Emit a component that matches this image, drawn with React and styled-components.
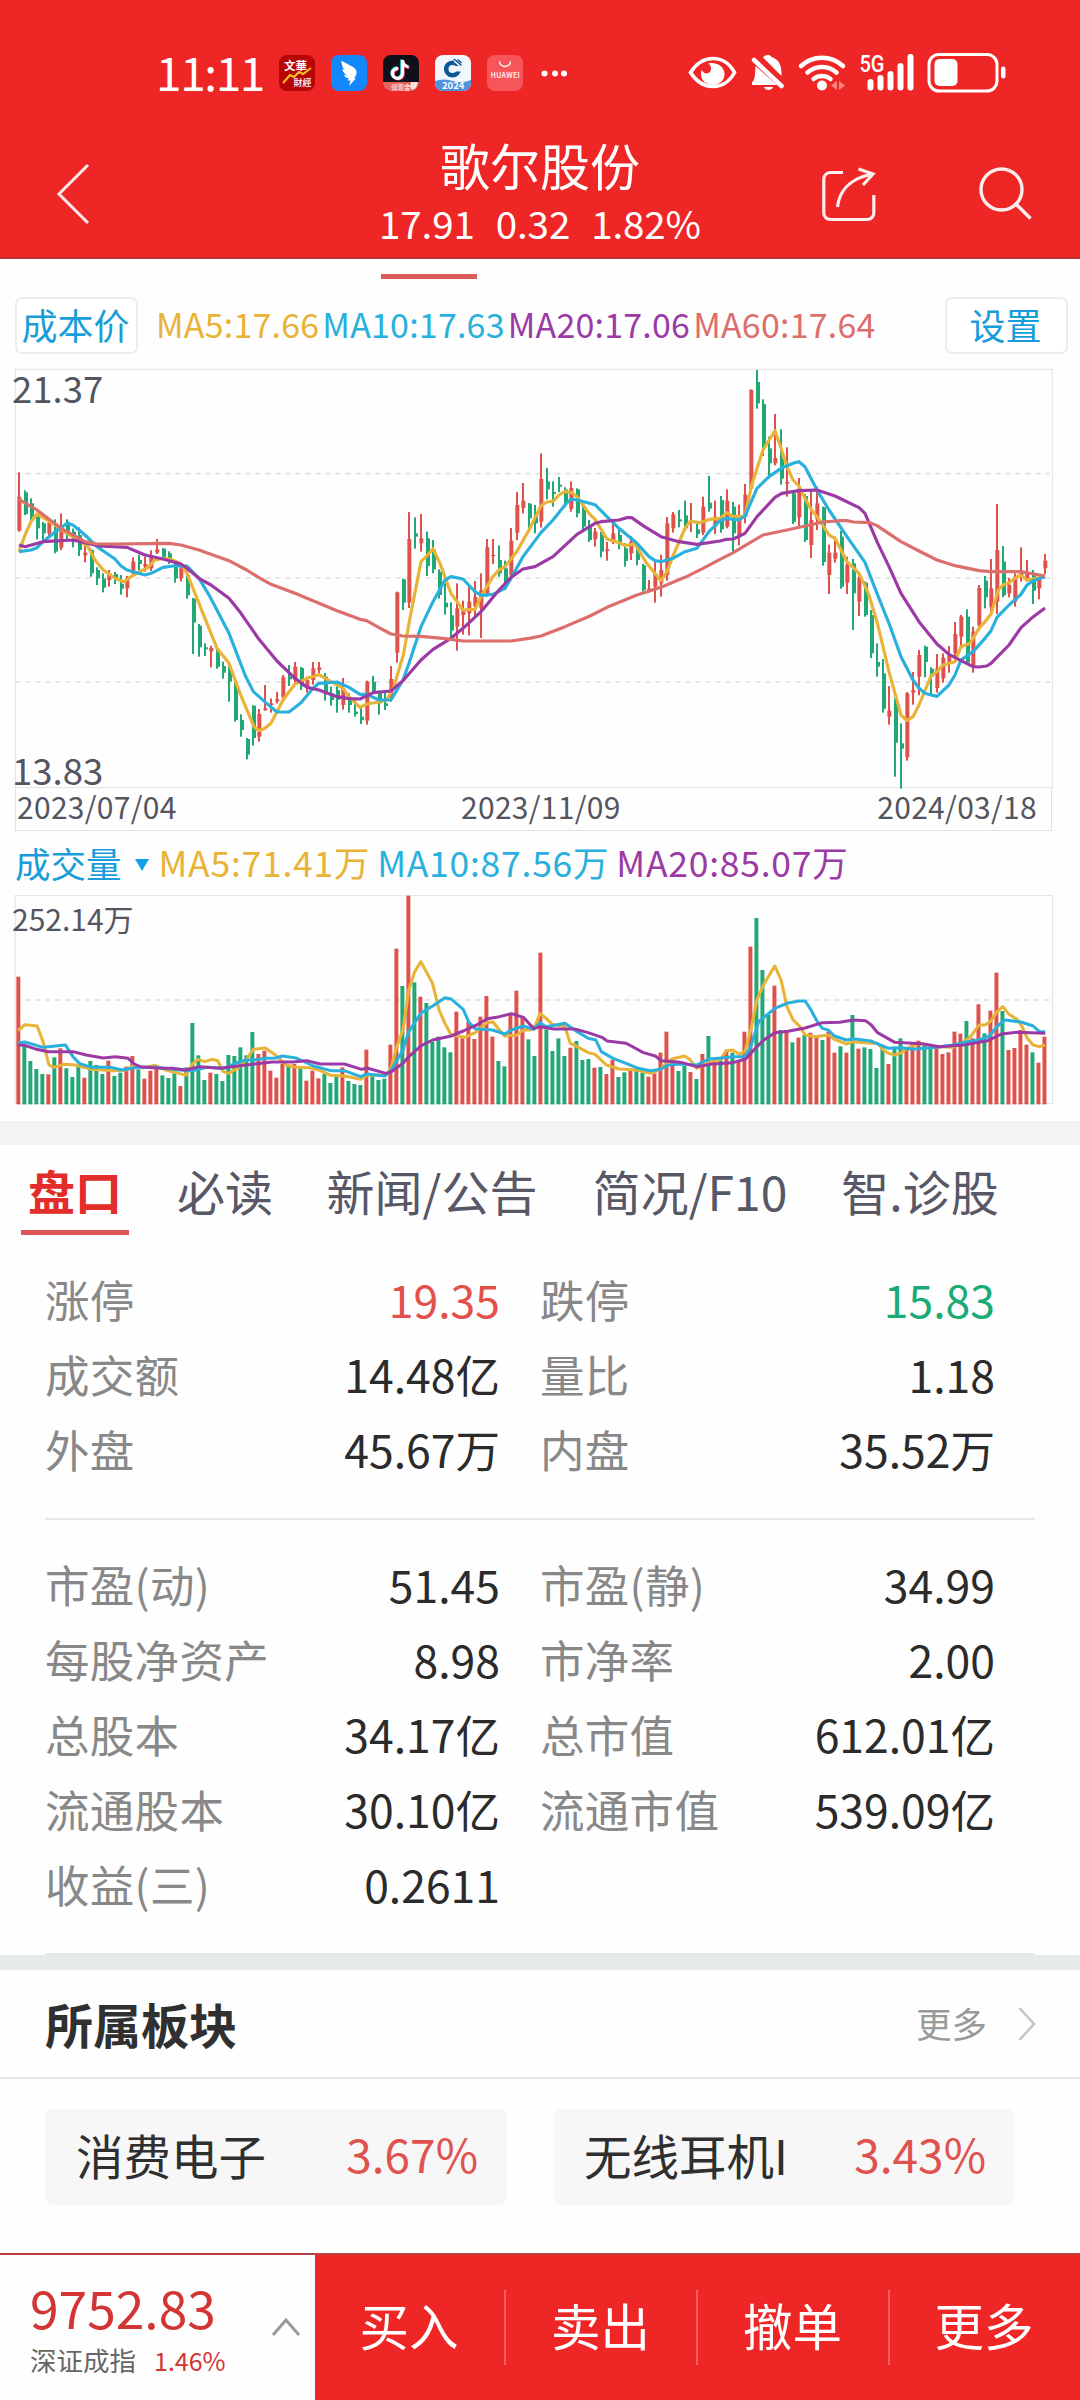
import * as React from "react";
import styled, { createGlobalStyle } from "styled-components";

const RED = "#df524c";
const GREEN = "#22a877";
const MA_COLORS = ["#e8b336", "#29b0dc", "#9c3aa5", "#dc6e6b"];

const GlobalStyle = createGlobalStyle`
  body {
    margin: 0;
    background: #fefefe;
    font-family: "Noto Sans CJK SC", "Noto Sans", sans-serif;
  }

  * {
    box-sizing: border-box;
  }
`;

const Page = styled.main`
  width: 1080px;
  height: 2400px;
  display: flex;
  flex-direction: column;
  overflow: hidden;
  background: #fefefe;
  white-space: nowrap;

  svg {
    display: block;
    flex: none;
  }
`;

/* ---------- header ---------- */

const Header = styled.header`
  height: 259px;
  background: #ee2726;
  border-bottom: 2px solid #b5332f;
  color: #fff;
`;

const StatusBar = styled.div`
  height: 130px;
  padding: 16px 74px 0 156px;
  display: flex;
  align-items: center;
`;

const Clock = styled.span`
  width: 123px;
  font-size: 46px;
  line-height: 60px;
  letter-spacing: -1.4px;
  margin-top: -4px;
`;

const AppIcons = styled.div`
  display: flex;
  align-items: center;
  gap: 16px;
`;

const SystemIcons = styled.div`
  display: flex;
  align-items: center;
  margin-left: auto;
`;

const NavBar = styled.div`
  height: 127px;
  display: grid;
  grid-template-columns: 300px 480px 300px;
`;

const NavSide = styled.div`
  display: flex;
  padding: ${(p) => p.$pad};
  gap: 103px;
`;

const Title = styled.div`
  text-align: center;
  padding-top: 4px;

  h1 {
    margin: 0;
    font-size: 50px;
    line-height: 60px;
    font-weight: 400;
  }
`;

const Quote = styled.div`
  display: flex;
  justify-content: center;
  gap: 21px;
  margin-top: -2px;
  font-size: 38.5px;
  line-height: 60px;
  letter-spacing: -0.1px;
`;

/* ---------- charts ---------- */

const TabMark = styled.div`
  width: 96px;
  height: 5px;
  margin: 15px 0 18px 381px;
  background: #dc5a5a;
  flex: none;
`;

const Toolbar = styled.div`
  height: 57px;
  margin: 0 12px 14px 15px;
  display: flex;
  align-items: center;
  flex: none;
`;

const ToolButton = styled.button`
  width: 123px;
  height: 57px;
  padding: 0 2px 3px 0;
  border: 2px solid #ededf0;
  border-radius: 7px;
  background: #fff;
  color: #199dd9;
  font: inherit;
  font-size: 36px;
  line-height: 50px;
`;

const Legend = styled.div`
  display: flex;
  flex: 1;
  gap: ${(p) => p.$gap};
  margin-left: ${(p) => p.$left};
  margin-bottom: ${(p) => p.$lift || 0};
  font-size: ${(p) => p.$size};
  letter-spacing: ${(p) => p.$spacing};
  line-height: 50px;
`;

const LegendItem = styled.span`
  color: ${(p) => p.$color};
`;

const ChartBox = styled.div`
  position: relative;
  flex: none;
`;

const ScaleLabel = styled.span`
  position: absolute;
  left: 12px;
  top: ${(p) => p.$top};
  font-size: ${(p) => p.$size};
  line-height: 38px;
  color: #54555f;
`;

const DateRow = styled.div`
  height: 42px;
  width: 1037px;
  margin-left: 15px;
  padding: 0 14px 7px 1px;
  display: grid;
  grid-template-columns: 444px 1fr auto;
  align-items: center;
  flex: none;
  border: solid #e2e2e2;
  border-width: 0 1px 1px;
  font-size: 30px;
  line-height: 34px;
  letter-spacing: 0.3px;
  color: #54555f;
`;

const VolumeHead = styled.div`
  height: 64px;
  padding: 0 0 0 15px;
  display: flex;
  align-items: center;
  flex: none;
`;

const VolumeName = styled.span`
  font-size: 35.5px;
  line-height: 50px;
  color: #199dd9;
`;

const Caret = styled.i`
  margin: 4px 0 0 13px;
  border: 7px solid transparent;
  border-top: 12px solid #13a0ea;
  border-bottom: 0;
`;

const Band = styled.div`
  height: ${(p) => p.$height};
  margin-top: ${(p) => p.$top || 0};
  background: ${(p) => p.$color};
  flex: none;
`;

/* ---------- details ---------- */

const Tabs = styled.nav`
  height: 90px;
  padding-left: 21px;
  display: flex;
  flex: none;
`;

const Tab = styled.a`
  width: ${(p) => p.$width};
  margin-right: ${(p) => p.$gap || 0};
  padding-top: 12px;
  text-align: center;
  font-size: ${(p) => (p.$active ? "47px" : "48px")};
  line-height: 66px;
  font-weight: ${(p) => (p.$active ? 700 : 400)};
  color: ${(p) => (p.$active ? "#e22d2b" : "#575766")};
  border-bottom: ${(p) => (p.$active ? "5px solid #dc5656" : "0")};
`;

const Stats = styled.section`
  margin: 0 45px;
  padding: ${(p) => p.$pad};
  display: grid;
  grid-template-columns: 455px 455px;
  column-gap: 40px;
  grid-auto-rows: 75px;
  border-bottom: 2px solid #e6e8e8;
  flex: none;
`;

const Stat = styled.div`
  display: flex;
  justify-content: space-between;
  align-items: center;
  font-size: 44.5px;
  line-height: 75px;
  letter-spacing: 0.3px;
  color: #888;
`;

const StatValue = styled.span`
  letter-spacing: 0;
  color: ${(p) => p.$color || "#2b2b2b"};
`;

const SectionHead = styled.div`
  height: 109px;
  padding: 0 44px 0 45px;
  display: flex;
  align-items: center;
  border-bottom: 2px solid #e4e5e6;
  flex: none;

  h2 {
    margin: 0 auto 1px 0;
    font-size: 48px;
    line-height: 60px;
    font-weight: 700;
    color: #303030;
  }

  span {
    margin: 0 31px 2px 0;
    font-size: 35.5px;
    line-height: 50px;
    color: #999;
  }
`;

const Boards = styled.div`
  padding: 30px 65px 0 45px;
  display: grid;
  grid-template-columns: 462px 462px;
  gap: 46px;
  flex: 1;
`;

const Board = styled.div`
  height: 96px;
  padding: 0 29px 6px 31px;
  display: flex;
  align-items: center;
  justify-content: space-between;
  border-radius: 8px;
  background: #f7f7f7;
  font-size: 47.5px;
  color: #2f2f2f;

  b {
    margin-bottom: 3px;
    font-weight: 400;
    font-size: 46px;
    color: #e0524d;
  }
`;

/* ---------- bottom bar ---------- */

const BottomBar = styled.footer`
  height: 147px;
  display: flex;
  flex: none;
  border-top: 2px solid #b5403f;
  background: #ee2726;
`;

const IndexBox = styled.div`
  width: 315px;
  padding: 22px 14px 0 30px;
  display: flex;
  justify-content: space-between;
  background: #fefefe;
  color: #d23534;

  svg {
    margin-top: 40px;
  }
`;

const IndexPrice = styled.div`
  font-size: 51.5px;
  line-height: 60px;
`;

const IndexName = styled.div`
  display: flex;
  gap: 18px;
  margin-top: 2px;
  font-size: 25px;
  line-height: 42px;

  span {
    font-size: 26.5px;
    color: #666;
  }
`;

const Actions = styled.div`
  flex: 1;
  display: grid;
  grid-template-columns: 189px 192px 192px 191px;
  align-items: center;
`;

const Action = styled.button`
  height: 75px;
  margin-top: -1px;
  padding: 0 1px 6px 0;
  border: 0;
  border-left: ${(p) => (p.$first ? "0" : "2px solid #f4605d")};
  background: none;
  color: #fff;
  font: inherit;
  font-size: 49.5px;
  line-height: 70px;
`;

/* ---------- data ---------- */

// up/down, high, body top, body bottom, low, volume top
const CANDLES = `
R 337 410 512 515 440|G 391 397 462 465 645|G 415 430 470 486 693|G 462 470 505 538 717|G 486 490 520 543 732
R 474 488 520 535 733|G 478 505 575 580 682|R 460 500 563 570 655|G 478 485 528 540 715|G 506 515 540 562 741
G 502 525 570 588 711|R 550 578 586 607 743|G 566 570 640 650 693|G 622 630 655 675 705|G 640 655 683 697 732
R 630 640 660 680 692|G 636 642 660 672 738|G 645 672 686 704 728|R 648 655 685 712 710|R 592 605 640 650 678
G 584 600 612 632 718|R 590 612 620 635 746|R 571 590 625 633 722|R 537 568 578 582 710|G 564 566 592 595 736
G 574 580 598 612 744|G 600 612 655 668 730|R 612 625 655 664 768|G 630 645 706 716 712|G 714 716 788 882 579
G 792 797 862 890 676|G 850 862 868 888 750|R 857 864 874 922 728|G 865 870 920 926 732|G 905 918 938 956 753
G 915 925 965 1025 675|G 960 972 1080 1085 678|G 1063 1080 1110 1130 652|G 1134 1137 1184 1198 676|G 1036 1037 1134 1157 606
R 1047 1062 1130 1145 672|R 975 1045 1050 1052 662|R 1015 1030 1035 1058 722|R 996 1018 1024 1030 743|R 945 952 1010 1018 702
G 915 950 958 978 710|R 906 920 960 970 702|G 921 924 980 990 712|R 950 960 985 998 752|R 906 925 960 974 722
R 906 922 930 940 745|G 939 950 1000 1022 732|G 980 1000 1020 1037 759|G 975 990 1020 1058 740|R 954 985 1035 1049 712
G 1000 1020 1035 1058 753|G 1020 1055 1062 1070 762|G 1040 1070 1080 1092 765|R 962 965 1082 1094 659|G 948 965 995 1000 738
G 992 1000 1030 1064 750|G 995 1030 1038 1050 746|R 918 957 1015 1025 644|R 695 697 878 908 356|G 656 658 728 750 468
R 456 537 728 744 197|G 472 520 530 566 457|R 462 535 550 575 500|G 515 535 618 648 519|G 540 570 628 640 635
G 628 635 705 716 620|G 670 728 742 764 652|G 727 766 812 834 667|R 670 745 800 872 545|R 722 750 765 824 625
R 672 725 760 826 575|R 663 710 740 768 627|R 640 690 745 834 560|R 537 562 700 710 498|R 537 585 588 612 620
G 556 600 640 650 693|G 602 625 665 690 709|R 504 542 645 660 555|R 396 435 518 540 482|R 369 422 444 460 562
G 429 431 475 505 628|G 435 465 490 520 678|R 280 357 485 503 368|G 324 364 388 418 598|G 364 396 402 440 663
G 351 374 380 396 625|G 382 388 430 442 678|R 364 384 446 455 653|G 385 388 460 472 633|G 435 450 500 508 690
G 480 495 540 546 687|R 504 515 538 560 713|G 516 525 575 592 711|R 546 568 573 602 732|R 490 520 540 552 690
G 510 525 550 568 741|G 550 565 603 620 727|R 528 545 580 600 722|G 556 560 600 616 722|G 612 616 690 695 728
R 660 685 692 698 740|R 600 640 680 728 730|R 584 630 670 710 668|R 471 490 645 662 605|R 456 463 505 518 690
G 450 478 484 502 723|G 422 466 505 512 708|R 429 480 488 516 726|G 490 508 522 534 747|R 410 440 518 525 672
G 348 428 446 455 618|R 422 470 500 522 690|G 408 420 508 518 682|R 388 422 500 505 665|G 426 440 520 574 668
R 434 465 525 556 690|R 372 404 470 490 605|R 88 90 385 390 350|G 30 66 130 146 264|G 118 132 260 288 420
G 230 265 310 356 555|R 162 294 310 316 467|G 208 295 356 374 600|R 262 366 371 410 600|G 392 400 486 492 637
R 354 385 472 502 623|G 402 408 540 546 615|R 390 480 555 594 608|R 380 430 478 510 615|G 440 442 606 617 630
R 554 578 645 702 605|R 530 578 596 608 668|G 512 530 680 686 649|R 590 615 668 702 668|G 597 610 700 810 555
R 640 655 725 768 656|G 664 668 765 770 652|G 750 765 880 894 657|G 850 906 920 950 714|G 897 940 1046 1058 645
R 978 1052 1070 1094 702|G 1015 1020 1148 1250 650|G 1090 1150 1166 1286 625|R 996 1000 1192 1202 660|R 936 990 998 1034 640
R 870 885 950 1006 632|G 857 860 906 952 645|G 922 926 950 1008 652|R 882 925 984 998 645|R 880 893 955 968 672
R 858 885 905 938 667|R 786 822 880 890 605|R 765 770 830 860 611|G 748 770 908 912 573|R 800 815 920 938 625
R 675 684 795 812 523|G 648 662 712 745 610|R 597 685 740 760 542|R 432 570 725 762 428|G 558 605 706 712 543
R 654 675 700 712 660|R 640 650 725 740 654|R 562 635 652 665 600|R 600 640 655 665 644|G 630 645 692 732 667
R 650 655 685 718 698|R 582 602 625 642 620`
  .trim()
  .split(/[|\n]/)
  .map((row) => {
    const [dir, ...nums] = row.split(" ");
    const [high, top, bottom, low, volume] = nums.map(Number);
    return { up: dir === "R", high, top, bottom, low, volume };
  });

const PRICE_LINES = [
  "57,575 75,525 93,485 111,462 129,472 165,495 201,520 237,540 264,560 285,600 310,630 345,655 372,666 390,652 417,636 440,625 465,600 489,595 515,598 543,612 561,640 597,730 651,865 687,910 720,1000 762,1100 777,1112 795,1105 813,1090 849,1020 885,972 921,955 957,944 993,965 1029,985 1047,1010 1080,1042 1100,1032 1137,1026 1160,1020 1180,985 1210,885 1227,790 1263,605 1280,588 1299,566 1320,610 1353,700 1389,750 1425,748 1445,705 1479,650 1497,630 1515,620 1550,575 1587,510 1623,437 1641,426 1659,424 1677,405 1695,394 1713,397 1731,410 1767,460 1785,478 1821,537 1857,548 1875,557 1905,552 1940,610 1983,662 2001,635 2020,585 2055,505 2070,484 2100,488 2130,478 2160,475 2180,458 2200,470 2235,468 2255,375 2289,270 2325,212 2343,265 2361,320 2379,360 2397,378 2415,415 2433,448 2451,470 2469,497 2487,525 2505,535 2541,605 2577,640 2605,700 2631,785 2649,860 2667,935 2703,1065 2721,1082 2739,1070 2757,1035 2793,948 2811,935 2829,915 2865,905 2883,860 2910,850 2937,805 2955,785 2973,762 2995,690 3009,675 3027,668 3045,655 3060,645 3081,660 3110,655 3135,650",
  "57,575 93,570 111,563 129,545 165,516 201,490 219,495 255,525 291,560 345,597 363,618 381,630 435,645 453,640 489,622 520,618 561,618 597,655 630,710 687,820 735,945 760,995 800,1030 831,1056 867,1056 903,1028 939,985 957,970 1011,966 1047,982 1080,1003 1100,1003 1137,1020 1173,1020 1209,960 1227,910 1263,800 1299,725 1335,660 1353,650 1389,657 1425,695 1443,706 1479,703 1515,685 1533,655 1569,590 1623,518 1659,480 1695,435 1713,417 1740,422 1785,434 1821,470 1857,505 1911,550 1947,590 1965,602 1983,605 2019,595 2055,575 2091,565 2127,515 2145,497 2160,482 2180,475 2217,480 2235,468 2271,385 2307,350 2343,325 2379,310 2397,305 2415,320 2451,390 2487,450 2541,530 2595,607 2631,700 2667,790 2703,890 2739,960 2757,985 2775,1000 2793,1005 2811,1009 2847,975 2865,945 2883,900 2919,875 2955,835 2973,812 2991,772 3027,735 3063,703 3081,675 3099,662 3135,650",
  "57,555 75,560 129,545 219,540 264,550 300,558 381,562 435,585 489,597 543,612 561,625 597,655 633,675 687,715 723,760 777,838 831,903 885,955 921,982 957,990 1011,1010 1047,1016 1080,1017 1120,998 1173,993 1209,962 1263,900 1299,868 1353,835 1389,805 1443,755 1497,690 1533,652 1569,627 1605,620 1659,590 1731,523 1785,490 1803,485 1857,480 1880,473 1895,473 1929,497 1983,530 2037,545 2091,553 2160,543 2180,538 2200,537 2235,520 2271,470 2325,412 2345,400 2397,392 2451,390 2505,408 2577,443 2595,460 2631,545 2667,620 2703,700 2757,785 2811,852 2847,883 2883,902 2919,920 2937,921 2960,918 2973,910 3027,855 3063,803 3100,770 3135,744",
  "57,418 111,450 183,505 255,545 291,552 340,552 507,550 543,555 597,570 687,602 740,630 777,653 813,673 885,700 957,730 1011,752 1060,770 1080,778 1100,782 1137,803 1173,822 1209,828 1263,829 1335,836 1389,843 1533,843 1587,835 1623,828 1695,800 1770,768 1821,742 1911,705 1983,682 2055,652 2109,625 2160,598 2200,578 2235,557 2289,525 2361,510 2415,498 2469,486 2523,482 2541,482 2560,486 2610,488 2631,497 2703,545 2757,573 2811,600 2865,617 2937,632 2973,635 3063,635 3135,648",
];

const VOLUME_LINES = [
  "53,602 72,584 108,588 125,635 142,705 158,712 185,703 220,705 265,718 330,722 367,720 390,705 415,713 450,706 480,720 520,730 540,736 560,700 575,688 595,695 615,688 632,692 648,725 665,730 690,715 715,690 735,658 770,654 800,675 830,705 860,712 900,713 930,722 960,736 1000,738 1047,748 1066,735 1120,736 1135,715 1152,650 1170,600 1187,480 1204,425 1222,395 1256,460 1275,540 1292,580 1310,615 1350,622 1380,608 1413,578 1432,576 1450,600 1466,618 1500,616 1520,600 1540,600 1555,585 1568,550 1586,565 1604,583 1640,590 1656,640 1676,650 1708,668 1728,673 1761,705 1798,717 1848,720 1888,730 1918,718 1935,700 1953,686 1988,678 2003,688 2023,715 2043,705 2068,695 2093,688 2108,662 2128,660 2146,672 2163,665 2180,600 2198,510 2218,462 2250,408 2268,450 2285,530 2303,570 2323,590 2338,615 2368,620 2405,615 2423,628 2458,642 2478,635 2528,640 2548,640 2565,660 2580,670 2600,675 2618,668 2634,655 2668,640 2718,650 2768,652 2793,640 2818,620 2843,585 2860,585 2878,572 2895,545 2912,530 2930,553 2953,568 2968,590 2983,625 3000,645 3018,650 3035,645",
  "53,638 72,636 125,652 190,645 212,680 230,700 265,712 320,712 355,720 400,712 450,712 520,720 558,722 600,712 650,715 690,697 715,690 740,690 770,685 800,684 820,678 860,684 910,708 960,722 1000,722 1047,740 1066,732 1118,738 1135,722 1170,660 1187,605 1222,550 1256,528 1275,515 1292,503 1310,507 1345,538 1362,578 1380,596 1430,600 1466,612 1485,600 1520,588 1550,598 1568,578 1586,590 1618,584 1640,580 1676,605 1708,625 1730,630 1746,665 1780,685 1818,700 1853,715 1888,722 1918,718 1938,706 1978,702 2023,705 2058,687 2093,684 2128,680 2163,680 2180,650 2203,575 2218,562 2250,535 2285,520 2320,513 2338,513 2355,540 2373,575 2388,595 2405,600 2423,618 2458,630 2478,626 2528,633 2580,655 2618,653 2651,658 2718,652 2768,645 2808,635 2843,630 2873,618 2895,590 2918,570 2965,576 3000,588 3018,605 3035,605",
  "53,645 72,646 100,656 140,665 212,665 250,675 300,684 335,680 372,685 390,702 410,711 460,714 500,715 540,720 580,710 640,715 690,708 740,702 790,696 850,696 890,692 930,702 1000,702 1050,718 1066,714 1120,730 1135,726 1170,700 1187,680 1222,648 1256,630 1310,618 1345,603 1380,587 1415,566 1450,560 1485,551 1520,562 1550,596 1568,590 1608,597 1668,597 1708,608 1748,622 1763,633 1818,640 1833,648 1868,668 1903,678 1920,692 1968,696 1988,700 2023,710 2068,702 2128,698 2165,687 2198,650 2218,630 2250,608 2288,604 2338,594 2388,578 2438,577 2478,570 2513,572 2530,585 2548,608 2598,637 2678,641 2728,650 2798,645 2868,632 2908,612 2953,607 3035,610",
];

const TRADES = [
  ["涨停", "19.35", "#e3504a"],
  ["跌停", "15.83", "#1bab77"],
  ["成交额", "14.48亿"],
  ["量比", "1.18"],
  ["外盘", "45.67万"],
  ["内盘", "35.52万"],
];

const FUNDAMENTALS = [
  ["市盈(动)", "51.45"],
  ["市盈(静)", "34.99"],
  ["每股净资产", "8.98"],
  ["市净率", "2.00"],
  ["总股本", "34.17亿"],
  ["总市值", "612.01亿"],
  ["流通股本", "30.10亿"],
  ["流通市值", "539.09亿"],
  ["收益(三)", "0.2611"],
];

/* ---------- drawings ---------- */

const PriceChart = () => (
  <svg width="1080" height="421" viewBox="0 24 3240 1263">
    <rect x="46" y="28" width="3111" height="1255" fill="none" stroke="#e2e2e2" strokeWidth="3" />
    {[341, 654, 966].map((y) => (
      <path key={y} d={`M46 ${y}H3150`} stroke="#e0e0e0" strokeWidth="5" strokeDasharray="16 14" />
    ))}
    {CANDLES.map((c, i) => {
      const x = 57 + 18 * i;
      return (
        <g key={i} fill={c.up ? RED : GREEN}>
          <rect x={x - 3} y={c.high} width="6" height={c.low - c.high} />
          <rect x={c.up ? x - 5 : x - 3} y={c.top} width="12" height={c.bottom - c.top} />
        </g>
      );
    })}
    {PRICE_LINES.map((points, i) => (
      <polyline key={i} points={points} fill="none" stroke={MA_COLORS[i]} strokeWidth="9.5" strokeLinejoin="round" />
    ))}
  </svg>
);

const VolumeChart = () => (
  <svg width="1080" height="210" viewBox="0 195 3136 630" preserveAspectRatio="none">
    <rect x="44" y="196" width="3012" height="625" fill="none" stroke="#e2e2e2" strokeWidth="3" />
    <path d="M44 510H3050" stroke="#e0e0e0" strokeWidth="5" strokeDasharray="16 13" />
    {CANDLES.map((c, i) => (
      <rect
        key={i}
        x={47.5 + 17.424 * i}
        y={c.volume}
        width="11.5"
        height={823 - c.volume}
        fill={c.up ? RED : GREEN}
      />
    ))}
    {VOLUME_LINES.map((points, i) => (
      <polyline key={i} points={points} fill="none" stroke={MA_COLORS[i]} strokeWidth="9" strokeLinejoin="round" />
    ))}
  </svg>
);

const NewsIcon = () => (
  <svg width="36" height="36" viewBox="0 0 36 36">
    <rect width="36" height="36" rx="8" fill="#b80607" />
    <text x="5" y="15" fontSize="11.5" fontWeight="700" fill="#fff">文華</text>
    <path d="M4 28l7-8 4 2 5-5 4 2 8-6" fill="none" stroke="#f3c524" strokeWidth="2" />
    <text x="14.5" y="31" fontSize="9" fontWeight="500" fill="#fff">財經</text>
  </svg>
);

const WingIcon = () => (
  <svg width="36" height="36" viewBox="0 0 36 36">
    <rect width="36" height="36" rx="8" fill="#1288fb" />
    <path d="M10.5 5.500c4 3.500 12 5 14.500 9.500 1.500 3 0 6-2 8.500h2L18 31l1.500-5.500h-3l1.500-2c-3-.5-4.500-2-5-3.500l3 .2c-3-1.500-4.500-4-4.700-6.200l2 .8c-2-3-3-6-2.800-9.300z" fill="#fff" />
  </svg>
);

const NoteIcon = () => (
  <svg width="36" height="36" viewBox="0 0 36 36">
    <rect width="36" height="36" rx="8" fill="#10101a" />
    <g fill="none" strokeWidth="3">
      <path d="M19.500 5v13.500a5 5 0 1 1-4.500-5M19.500 6c1 4 3 5.500 6 6" stroke="#35d5d8" transform="translate(-.8 -.6)" />
      <path d="M19.500 5v13.500a5 5 0 1 1-4.500-5M19.500 6c1 4 3 5.500 6 6" stroke="#f04a69" transform="translate(.8 .6)" />
      <path d="M19.500 5v13.500a5 5 0 1 1-4.500-5M19.500 6c1 4 3 5.500 6 6" stroke="#fff" />
    </g>
    <path d="M0 27h36v1a8 8 0 0 1-8 8H8a8 8 0 0 1-8-8z" fill="#e9625b" />
    <text x="8" y="34.500" fontSize="6.500" fill="#fff">领现金</text>
    <path d="M28 27h7l-2 6-4 2-2-3z" fill="#fbe3dc" />
  </svg>
);

const BankIcon = () => (
  <svg width="36" height="36" viewBox="0 0 36 36">
    <rect width="36" height="36" rx="8" fill="#f2f7fc" />
    <circle cx="17.500" cy="14" r="6.300" fill="none" stroke="#0d5798" strokeWidth="4.600" />
    <path d="M18 11h9v5.500h-9zM20 3l8 6-3 3-6-5z" fill="#f2f7fc" />
    <path d="M19 4l7.500 6.500M22.500 4.500l4 3.500" stroke="#0d5798" strokeWidth="1.500" />
    <path d="M0 26q9-3 18 0t18-1v3a8 8 0 0 1-8 8H8a8 8 0 0 1-8-8z" fill="#4d94df" />
    <text x="7" y="33.500" fontSize="9.500" fontWeight="700" fill="#fff">2024</text>
  </svg>
);

const StoreIcon = () => (
  <svg width="36" height="36" viewBox="0 0 36 36">
    <rect width="36" height="36" rx="8" fill="#f65659" />
    <path d="M12.500 6.500a5.500 5 0 0 0 11 0" fill="none" stroke="#fff" strokeWidth="1.300" />
    <text x="3.700" y="23" fontSize="7" fontWeight="500" fill="#fff" textLength="29">HUAWEI</text>
  </svg>
);

const MoreDots = () => (
  <svg width="28" height="8" viewBox="0 0 28 8" fill="#fff">
    <circle cx="5.500" cy="4.500" r="3" />
    <circle cx="16" cy="4.500" r="3" />
    <circle cx="25" cy="4.500" r="3" />
  </svg>
);

const SystemStatus = () => (
  <svg width="318" height="42" viewBox="0 0 318 42" fill="#fff">
    {/* eye */}
    <path d="M2.500 20.500C8 12 16 6.500 25 6.500S42 12 46.500 20.500C42 29 34 34.500 25 34.500S8 29 2.500 20.500z" fill="none" stroke="#fff" strokeWidth="3.600" />
    <path d="M20.500 11.500c6-1.800 16 2 16 10.500 0 7-5.500 11-11.500 11s-12-4-12-11c0-2 .3-3 .8-4 1.700 3.500 4.700 4 6.700 3 3.500-2 3.500-6 0-9.500z" />
    {/* muted bell */}
    <path d="M75 5.500c1.500-3 7-3.500 8.500-.5 8.500 3 10 9 10 17V24zM67.500 14L89 33H64v-2.500c3-3 3-6.500 3.500-16.500zM76 35h9c-1 4-8 4-9 0z" />
    <path d="M66 8l27.500 26" stroke="#fff" strokeWidth="4.500" strokeLinecap="round" />
    {/* wifi */}
    <g fill="none" stroke="#fff" strokeWidth="4.500" strokeLinecap="round">
      <path d="M113 14a31 31 0 0 1 42 0M119.500 20.500a22 22 0 0 1 29 0M125.500 27a14 14 0 0 1 17 0" />
    </g>
    <circle cx="134" cy="33.500" r="5" />
    <path d="M149 29v9l-6-4.500zM151 29v9l6-4.500z" fill="#f78582" />
    {/* mobile signal */}
    <text x="171.500" y="19.500" fontFamily="Roboto" fontWeight="500" fontSize="23" textLength="25" lengthAdjust="spacingAndGlyphs">5G</text>
    <rect x="179.500" y="27" width="6" height="11.500" rx="3" />
    <rect x="189.500" y="23" width="6" height="15.500" rx="3" />
    <rect x="199.500" y="19" width="6" height="19.500" rx="3" />
    <rect x="209.500" y="11" width="6" height="27.500" rx="3" />
    <rect x="219.500" y="2" width="6" height="36.500" rx="3" />
    {/* battery */}
    <rect x="241" y="2.500" width="68" height="36.500" rx="10" fill="none" stroke="#fff" strokeWidth="3" />
    <rect x="246.500" y="7" width="23" height="27" rx="5" />
    <rect x="313" y="14.500" width="4.500" height="12" rx="2.200" />
  </svg>
);

const BackIcon = () => (
  <svg width="34" height="62" viewBox="0 0 34 62" fill="none" stroke="#fff" strokeWidth="3" opacity=".9">
    <path d="M32 2L3 31l29 29" />
  </svg>
);

const ShareIcon = () => (
  <svg width="54" height="56" viewBox="0 0 54 56" fill="none" stroke="#fff" strokeWidth="3.200" opacity=".92">
    <path d="M21 6.500H8A6.500 6.500 0 0 0 1.800 13v34a6.500 6.500 0 0 0 6.500 6.500h37a6.500 6.500 0 0 0 6.500-6.500V29" />
    <path d="M15.500 41C17 27 26 13 50 8M36.500 3L51 8 41 19" />
  </svg>
);

const SearchIcon = () => (
  <svg width="54" height="54" viewBox="0 0 54 54" fill="none" stroke="#fff" strokeWidth="3.400" opacity=".92">
    <circle cx="22.500" cy="23.500" r="20.500" />
    <path d="M36 37l15.500 15.500" />
  </svg>
);

const StatList = ({ items, pad }) => (
  <Stats $pad={pad}>
    {items.map(([name, value, color]) => (
      <Stat key={name}>
        {name}
        <StatValue $color={color}>{value}</StatValue>
      </Stat>
    ))}
  </Stats>
);

const App = () => (
  <Page>
    <GlobalStyle />
    <Header>
      <StatusBar>
        <Clock>11:11</Clock>
        <AppIcons>
          <NewsIcon />
          <WingIcon />
          <NoteIcon />
          <BankIcon />
          <StoreIcon />
          <MoreDots />
        </AppIcons>
        <SystemIcons>
          <SystemStatus />
        </SystemIcons>
      </StatusBar>
      <NavBar>
        <NavSide $pad="33px 0 0 56px">
          <BackIcon />
        </NavSide>
        <Title>
          <h1>歌尔股份</h1>
          <Quote>
            <span>17.91</span>
            <span>0.32</span>
            <span>1.82%</span>
          </Quote>
        </Title>
        <NavSide $pad="36px 0 0 42px">
          <ShareIcon />
          <SearchIcon />
        </NavSide>
      </NavBar>
    </Header>

    <TabMark />
    <Toolbar>
      <ToolButton>成本价</ToolButton>
      <Legend $size="34px" $gap="3px" $left="18px" $lift="4px" $spacing="0.2px">
        <LegendItem $color={MA_COLORS[0]}>MA5:17.66</LegendItem>
        <LegendItem $color={MA_COLORS[1]}>MA10:17.63</LegendItem>
        <LegendItem $color={MA_COLORS[2]}>MA20:17.06</LegendItem>
        <LegendItem $color={MA_COLORS[3]}>MA60:17.64</LegendItem>
      </Legend>
      <ToolButton>设置</ToolButton>
    </Toolbar>
    <ChartBox>
      <PriceChart />
      <ScaleLabel $top="1px" $size="36.5px">21.37</ScaleLabel>
      <ScaleLabel $top="383px" $size="36.5px">13.83</ScaleLabel>
    </ChartBox>
    <DateRow>
      <span>2023/07/04</span>
      <span>2023/11/09</span>
      <span>2024/03/18</span>
    </DateRow>

    <VolumeHead>
      <VolumeName>成交量</VolumeName>
      <Caret />
      <Legend $size="35.5px" $gap="7px" $left="10px" $lift="2px" $spacing="0.75px">
        <LegendItem $color={MA_COLORS[0]}>MA5:71.41万</LegendItem>
        <LegendItem $color={MA_COLORS[1]}>MA10:87.56万</LegendItem>
        <LegendItem $color={MA_COLORS[2]}>MA20:85.07万</LegendItem>
      </Legend>
    </VolumeHead>
    <ChartBox>
      <VolumeChart />
      <ScaleLabel $top="4px" $size="30px">252.14万</ScaleLabel>
    </ChartBox>

    <Band $height="24px" $top="16px" $color="#f3f3f3" />
    <Tabs>
      <Tab $active $width="108px" $gap="48px">盘口</Tab>
      <Tab $width="96px" $gap="53px">必读</Tab>
      <Tab $width="212px" $gap="53px">新闻/公告</Tab>
      <Tab $width="198px" $gap="52px">简况/F10</Tab>
      <Tab $width="158px">智.诊股</Tab>
    </Tabs>
    <StatList items={TRADES} pad="26px 0 32px" />
    <StatList items={FUNDAMENTALS} pad="26px 0 32px" />
    <Band $height="15px" $color="#e6eaea" />

    <SectionHead>
      <h2>所属板块</h2>
      <span>更多</span>
      <svg width="18" height="36" viewBox="0 0 18 36" fill="none" stroke="#c4c4c4" strokeWidth="2.500">
        <path d="M1.500 2L16 18 1.500 34" />
      </svg>
    </SectionHead>
    <Boards>
      <Board>
        消费电子 <b>3.67%</b>
      </Board>
      <Board>
        无线耳机I <b>3.43%</b>
      </Board>
    </Boards>

    <BottomBar>
      <IndexBox>
        <div>
          <IndexPrice>9752.83</IndexPrice>
          <IndexName>
            <span>深证成指</span>1.46%
          </IndexName>
        </div>
        <svg width="30" height="20" viewBox="0 0 30 20" fill="none" stroke="#999" strokeWidth="3">
          <path d="M2 18L15 3l13 15" />
        </svg>
      </IndexBox>
      <Actions>
        <Action $first>买入</Action>
        <Action>卖出</Action>
        <Action>撤单</Action>
        <Action>更多</Action>
      </Actions>
    </BottomBar>
  </Page>
);

export default App;
